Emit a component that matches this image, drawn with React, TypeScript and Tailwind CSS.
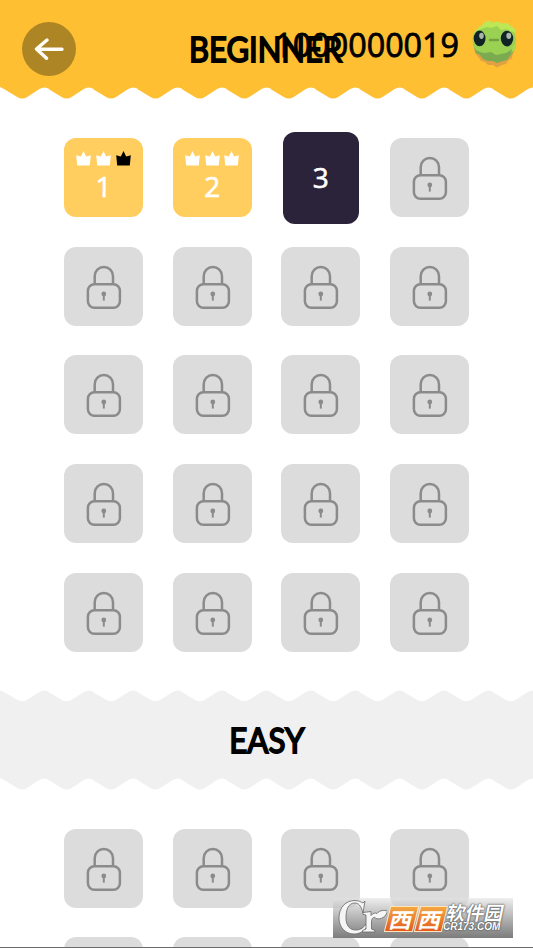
const WAVE_COUNT = 12;
const STEP = 533 / WAVE_COUNT;

// Zigzag with soft tips, `top` marks the high points and `bottom` the low ones
function wavePoints(top: number, bottom: number) {
  let d = '';
  for (let i = 0; i < WAVE_COUNT; i++) {
    const x = i * STEP;
    const mid = x + STEP / 2;
    const end = x + STEP;
    d += ` L${x + 4} ${top + 1.8} L${mid - 5} ${bottom - 1.8} Q${mid} ${bottom + 1.4} ${mid + 5} ${bottom - 1.8}`;
    d += ` L${end - 5} ${top + 1.8} Q${end} ${top - 1.4} ${end + 5} ${top + 1.8}`;
  }
  return d;
}

function WaveBottom({ className }: { className: string }) {
  return (
    <svg className={`block h-3 w-full ${className}`} viewBox="0 0 533 12" preserveAspectRatio="none" fill="currentColor">
      <path d={`M0 0 L0 0 ${wavePoints(0.3, 11.8)} L540 0 Z`} />
    </svg>
  );
}

function WaveTop({ className }: { className: string }) {
  return (
    <svg className={`block h-3 w-full ${className}`} viewBox="0 0 533 12" preserveAspectRatio="none" fill="currentColor">
      <path d={`M0 12 L0 0.3 ${wavePoints(0.3, 11.5)} L540 12 Z`} />
    </svg>
  );
}

function Crown({ filled }: { filled: boolean }) {
  return (
    <svg className={`h-[15px] w-[15px] ${filled ? 'text-white' : 'text-black'}`} viewBox="0 0 15 15" fill="currentColor">
      <path d="M0.2 4.2 L4.8 5.6 L7.5 0 L10.2 5.6 L14.8 4.2 L13.8 14.6 H1.2 Z" />
    </svg>
  );
}

function LockIcon() {
  return (
    <svg className="h-[79px] w-[79px] text-[#8b8b8b]" viewBox="0 0 79 79" fill="none" stroke="currentColor" strokeWidth="2.5">
      <path d="M30.7 37.3 V29.2 A9.15 9.15 0 0 1 49 29.2 V37.3" />
      <rect x="23.9" y="37.3" width="32" height="23.4" rx="6.5" />
      <circle cx="39.8" cy="47" r="2.4" fill="currentColor" stroke="none" />
      <path d="M39.8 47 V53.6" strokeWidth="2" />
    </svg>
  );
}

function LockedTile() {
  return (
    <div className="h-[79px] w-[79px] rounded-xl bg-[#dcdcdc]">
      <LockIcon />
    </div>
  );
}

function LevelNumber({ level }: { level: number }) {
  return (
    <span className="font-['Open_Sans',sans-serif] text-[28px] leading-[29px] [-webkit-text-stroke:0.6px_white]">{level}</span>
  );
}

function DoneTile({ level, crowns }: { level: number; crowns: number }) {
  return (
    <div className="flex h-[79px] w-[79px] flex-col items-center rounded-xl bg-[#ffce5e] pt-[13px] text-white">
      <div className="mb-1.5 flex gap-[4.8px]">
        {[0, 1, 2].map((i) => (
          <Crown key={i} filled={i < crowns} />
        ))}
      </div>
      <LevelNumber level={level} />
    </div>
  );
}

function CurrentTile({ level }: { level: number }) {
  return (
    <div className="flex h-[79px] w-[79px] items-center justify-center">
      <div className="flex h-[92px] w-[76px] shrink-0 items-center justify-center rounded-xl bg-[#2b2339] text-white">
        <LevelNumber level={level} />
      </div>
    </div>
  );
}

function Mascot() {
  return (
    <svg className="h-[50px] w-[48px]" viewBox="0 0 48 50">
      <path d="M4 28 L5 34 L9 39 L11 42 L15 43 L18 46 L23 46 L27 48.5 L32 46 L36 45 L38 42 L42 39 L43 34 L46 27 Z" fill="#e0a044" />
      <path d="M3 25 L6 34 L10 36 L13 40 L18 42 L23 42 L27 44 L33 42 L37 41 L40 37 L44 32 L45 26 Z" fill="#7bab51" />
      <path d="M4 14 L2.5 20 L3 26 L6 31 L10 33 L14 34 L21 33 L26 36 L31 35 L36 34 L41 31 L45 28 L46 20 L44 12 L37 5 L12 6 Z" fill="#9bd152" />
      <path d="M5 13 L8 9 L12 6 L15 3 L19 1.5 L22 3.5 L28 2.5 L32 4.5 L37 4 L41 7 L45 10 L45.5 14 L41 12 L36 10 L31 11 L27 7 L21 9 L17 8 L11 10 Z" fill="#bce857" />
      <path d="M43 27 L46 25 L45 31 L41 34 Z" fill="#a9d94f" />
      <ellipse cx="9.6" cy="19.4" rx="5.9" ry="7.8" fill="#122326" />
      <ellipse cx="37" cy="19.6" rx="6.2" ry="7.8" fill="#122326" />
      <ellipse cx="11.5" cy="16.8" rx="2.3" ry="3.1" fill="#aab5aa" />
      <ellipse cx="38.8" cy="16.8" rx="2.5" ry="3.1" fill="#aab5aa" />
      <path d="M20 21 H28" stroke="#729f40" strokeWidth="2.5" strokeLinecap="round" />
    </svg>
  );
}

function Watermark() {
  return (
    <div className="absolute top-[898px] left-[333px] flex h-10 w-[180px] bg-linear-to-b from-[#e4e4e4]/60 to-[#7c7c7c]">
      <svg className="h-10 w-[54px] shrink-0" viewBox="0 0 54 40">
        <g fill="#f5f5f5" stroke="#666" strokeWidth="0.8" strokeLinejoin="round">
          <path d="M32 3 L30 15 C28 7 25 5 22 5 C15 5 13 12 13 20 C13 28 17 32 23 32 C28 32 31 29 33 26 L34 29 C30 34 26 36 21 36 C12 36 6 29 6 20 C6 9 13 2.5 22 2.5 C26 2.5 28 4 30 5 Z" />
          <path d="M30 14.5 L38 13.5 V17.5 C40 15 42 14.5 44 15.5 C47 12 51 12 54.5 13 C53 19 48 22 43 20.5 C41 18 38.5 20 38.5 24 V31 L42 32.5 V34 H29.5 V32.5 L33 31 V17 L30 16.5 Z" />
        </g>
      </svg>
      <div className="mt-2 flex h-[26px] w-[58px] shrink-0 -skew-x-[14deg] gap-px">
        {['a', 'b'].map((id) => (
          <div
            key={id}
            className="flex w-[29px] items-center justify-center border border-[#ffe5bd] bg-linear-to-b from-[#f3a642] to-[#e45a1c] font-['Noto_Sans_CJK_SC',sans-serif] text-[21px] leading-6 font-bold text-white"
          >
            <span className="scale-x-110">西</span>
          </div>
        ))}
      </div>
      <div className="flex flex-col text-white [text-shadow:0_0_2px_#444,0_0_1px_#444]">
        <span className="mt-1 ml-0.5 -skew-x-12 font-['Noto_Sans_CJK_SC',sans-serif] text-[19px] leading-5 font-bold whitespace-nowrap">软件园</span>
        <span className="-ml-0.5 font-['Liberation_Sans',sans-serif] text-[10px] leading-[10px] font-bold italic">CR173.COM</span>
      </div>
    </div>
  );
}

export default function App() {
  return (
    <div className="relative h-[948px] w-[533px] overflow-hidden bg-white text-black">
      <header>
        <div className="relative flex h-[87px] items-start justify-end bg-[#ffbf33] pr-[15px]">
          <div className="mt-[22px] ml-[22px] mr-auto flex h-[54px] w-[54px] items-center justify-center rounded-full bg-[#ae8525]">
            <svg className="h-[22px] w-[30px]" viewBox="0 0 30 22" fill="none" stroke="#fffdf8" strokeWidth="3.4" strokeLinecap="round" strokeLinejoin="round">
              <path d="M28 11.3 H3 M13 2 L2.5 11 L12.5 20.3" />
            </svg>
          </div>
          <h1 className="absolute top-[29px] left-[189px] origin-left scale-x-[0.91] font-[Lato,sans-serif] text-[34px] leading-10 font-normal whitespace-nowrap [-webkit-text-stroke:1.8px_black]">
            BEGINNER
          </h1>
          <span className="relative mt-6 mr-[11px] font-['Open_Sans',sans-serif] text-[32.3px] leading-10 [-webkit-text-stroke:0.8px_black]">
            1000000019
          </span>
          <div className="mt-[19px]">
            <Mascot />
          </div>
        </div>
        <WaveBottom className="text-[#ffbf33]" />
      </header>

      <section className="mt-[39px] ml-16 grid w-[405px] grid-cols-4 gap-[29.65px]">
        <DoneTile level={1} crowns={2} />
        <DoneTile level={2} crowns={3} />
        <CurrentTile level={3} />
        {Array.from({ length: 17 }).map((_, i) => (
          <LockedTile key={i} />
        ))}
      </section>

      <section className="mt-[38.6px]">
        <WaveTop className="text-[#f0f0f0]" />
        <div className="flex h-[76px] items-center justify-center bg-[#f0f0f0]">
          <h2 className="scale-x-[0.92] font-[Lato,sans-serif] text-[34px] leading-10 font-normal [-webkit-text-stroke:1.8px_black]">
            EASY
          </h2>
        </div>
        <WaveBottom className="text-[#f0f0f0]" />
      </section>

      <section className="mt-[38.4px] ml-16 grid w-[405px] grid-cols-4 gap-[29.65px]">
        {Array.from({ length: 8 }).map((_, i) => (
          <LockedTile key={i} />
        ))}
      </section>

      <Watermark />
      <div className="absolute bottom-0 left-0 h-px w-full bg-[#6b6b6b]" />
    </div>
  );
}
